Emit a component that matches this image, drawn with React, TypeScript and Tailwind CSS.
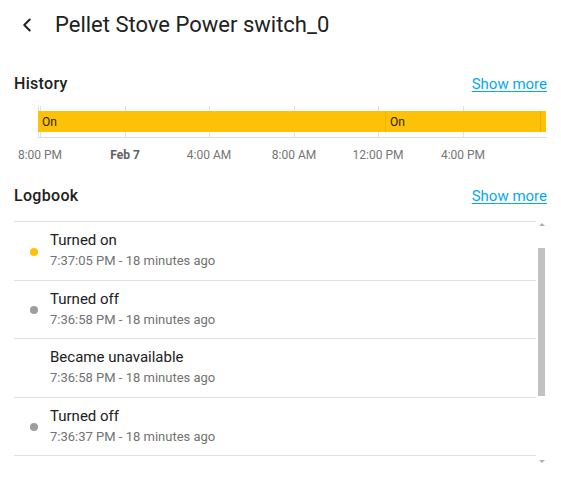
import { ChevronLeft } from "lucide-react"

const ticks = [
  { x: 26, label: "8:00 PM", bold: false },
  { x: 111, label: "Feb 7", bold: true },
  { x: 195, label: "4:00 AM", bold: false },
  { x: 280, label: "8:00 AM", bold: false },
  { x: 364, label: "12:00 PM", bold: false },
  { x: 449, label: "4:00 PM", bold: false },
]

const entries = [
  { title: "Turned on", time: "7:37:05 PM - 18 minutes ago", dot: "bg-[#ffc107]" },
  { title: "Turned off", time: "7:36:58 PM - 18 minutes ago", dot: "bg-[#9e9e9e]" },
  { title: "Became unavailable", time: "7:36:58 PM - 18 minutes ago", dot: "" },
  { title: "Turned off", time: "7:36:37 PM - 18 minutes ago", dot: "bg-[#9e9e9e]" },
]

function SectionHeader({ title }: { title: string }) {
  return (
    <div className="flex items-center justify-between h-[24px]">
      <h2 className="text-[16px] font-medium tracking-[0.02em] text-[#212121]">{title}</h2>
      <a className="text-[15px] text-[#03a9f4] underline underline-offset-2 cursor-pointer">Show more</a>
    </div>
  )
}

export default function App() {
  return (
    <div className="w-[561px] h-[478px] bg-white font-['Roboto',sans-serif] overflow-hidden">
      {/* Header */}
      <div className="flex items-center h-[50px] pl-[16px]">
        <ChevronLeft className="w-[22px] h-[22px] text-[#212121]" strokeWidth={2.2} />
        <h1 className="ml-[17px] text-[22px] text-[#212121] leading-none">Pellet Stove Power switch_0</h1>
      </div>

      <div className="px-[14px] pt-[22px]">
        <SectionHeader title="History" />

        {/* Timeline chart */}
        <div className="relative h-[62px] mt-[10px]">
          {ticks.map((t) => (
            <div key={t.x} className="absolute top-0 h-[31px] w-px bg-[#e0e0e0]" style={{ left: t.x }} />
          ))}
          <div className="absolute top-0 left-[24px] h-[31px] w-px bg-[#e0e0e0]" />
          <div className="absolute top-[31px] left-[24px] right-0 h-px bg-[#e0e0e0]" />
          <div className="absolute top-[5px] left-[24px] right-[1px] h-[21px] bg-[#fdc107] flex text-[12px] text-[#212121]">
            <div className="w-[347px] pl-[4px] flex items-center">On</div>
            <div className="flex-1 pl-[4px] flex items-center border-l border-[#f0b400]">On</div>
            <div className="w-[6px] border-l border-[#e5ae00]" />
          </div>
          {ticks.map((t) => (
            <div
              key={t.label}
              className={`absolute top-[43px] -translate-x-1/2 text-[12px] leading-none whitespace-nowrap ${
                t.bold ? "font-bold text-[#616161]" : "text-[#757575]"
              }`}
              style={{ left: t.x }}
            >
              {t.label}
            </div>
          ))}
        </div>

        <div className="mt-[16px]">
          <SectionHeader title="Logbook" />
        </div>

        {/* Logbook list with scrollbar */}
        <div className="flex mt-[13px] h-[246px]">
          <div className="flex-1">
            <div className="border-t border-[#e0e0e0]" />
            {entries.map((e, i) => (
              <div key={i} className="flex items-center h-[58.5px] border-b border-[#e0e0e0]">
                <div className="w-[36px] pl-[16px] pt-[2px] flex">
                  {e.dot && <span className={`w-[8px] h-[8px] rounded-full ${e.dot}`} />}
                </div>
                <div className="flex flex-col gap-[4px] -mt-[1px]">
                  <span className="text-[15px] leading-[18px] text-[#212121]">{e.title}</span>
                  <span className="text-[13px] leading-[16px] text-[#727272]">{e.time}</span>
                </div>
              </div>
            ))}
          </div>
          <div className="w-[11px] flex flex-col items-center">
            <div className="h-[2px]" />
            <div className="w-0 h-0 border-l-[3px] border-r-[3px] border-b-[3px] border-l-transparent border-r-transparent border-b-[#b0b0b0]" />
            <div className="h-[22px]" />
            <div className="w-[7px] h-[148px] bg-[#c1c1c1]" />
            <div className="flex-1" />
            <div className="w-0 h-0 border-l-[3px] border-r-[3px] border-t-[3px] border-l-transparent border-r-transparent border-t-[#b0b0b0]" />
            <div className="h-[4px]" />
          </div>
        </div>
      </div>
    </div>
  )
}
